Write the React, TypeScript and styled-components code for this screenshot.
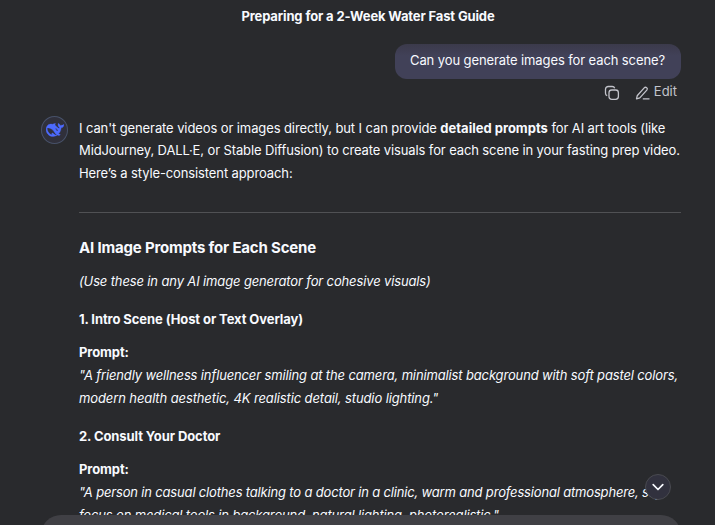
import React from "react";
import styled, { createGlobalStyle } from "styled-components";

const GlobalStyle = createGlobalStyle`
  * { box-sizing: border-box; }
  body {
    margin: 0;
    background: #292a2d;
    color: #f8faff;
    font-family: Inter, "Liberation Sans", sans-serif;
    font-size: 13px;
  }
`;

const Page = styled.main`
  position: relative;
  width: 715px;
  height: 525px;
  overflow: hidden;
  background: #292a2d;
`;

const Header = styled.header`
  height: 44px;
  padding: 5px 0 0 21px;
  text-align: center;
  font-weight: 700;
  line-height: 22px;
  letter-spacing: -0.14px;
`;

const Thread = styled.section`
  display: flex;
  flex-direction: column;
  padding: 0 34px 0 41px;
`;

const Bubble = styled.div`
  align-self: flex-end;
  width: 286px;
  height: 35px;
  padding: 0 0 0 15px;
  border-radius: 12px;
  background: linear-gradient(#3b3a4b, #414158 12px);
  line-height: 33px;
  white-space: nowrap;
  letter-spacing: -0.1px;
`;

const Actions = styled.div`
  display: flex;
  align-self: flex-end;
  align-items: center;
  height: 27px;
  padding-right: 4px;
  color: #c3c4cb;
  line-height: 24px;
`;

const EditLabel = styled.span`
  padding-bottom: 3px;
`;

const CopyIcon = styled.svg`
  width: 16px;
  height: 16px;
  margin: 0 15px 0 0;
`;

const EditIcon = styled.svg`
  width: 16px;
  height: 16px;
  margin: 0 3px 0 0;
`;

const Reply = styled.article`
  display: flex;
  gap: 11px;
  padding-top: 10px;
`;

const Avatar = styled.div`
  display: flex;
  align-items: center;
  justify-content: center;
  flex: none;
  width: 27px;
  height: 28px;
  border: 1px solid #48526a;
  border-radius: 50%;
  background: #30303b;
`;

const Content = styled.div`
  flex: none;
  width: 602px;
  padding-top: 1px;
`;

const Line = styled.div<{ $track?: number }>`
  height: 22.4px;
  line-height: 22.4px;
  white-space: nowrap;
  letter-spacing: ${(p) => (p.$track === undefined ? "inherit" : `${p.$track}px`)};
`;

const Paragraph = styled.div<{ $top?: number; $italic?: boolean }>`
  margin-top: ${(p) => p.$top ?? 0}px;
  font-style: ${(p) => (p.$italic ? "italic" : "normal")};
  letter-spacing: ${(p) => (p.$italic ? -0.135 : -0.115)}px;
`;

const Strong = styled.strong`
  font-weight: 700;
  letter-spacing: 0;
`;

const Rule = styled.hr`
  height: 1px;
  margin: 27.8px 0 0;
  border: 0;
  background: #505154;
`;

const Heading = styled.h3`
  margin: 23px 0 0;
  font-size: 15px;
  font-weight: 700;
  line-height: 24px;
  letter-spacing: -0.18px;
`;

const SceneTitle = styled.h4`
  margin: 16px 0 0;
  font-size: 13px;
  font-weight: 700;
  line-height: 22px;
  letter-spacing: -0.09px;
`;

const PromptLabel = styled.div`
  margin-top: 11px;
  font-weight: 700;
  line-height: 23px;
  letter-spacing: -0.1px;
`;

const Composer = styled.div`
  position: absolute;
  left: 41px;
  right: 34px;
  bottom: -60px;
  height: 70px;
  border-radius: 20px;
  background: #404045;
`;

const ScrollButton = styled.button`
  position: absolute;
  left: 645px;
  top: 474px;
  display: flex;
  align-items: center;
  justify-content: center;
  width: 26px;
  height: 26px;
  padding: 0;
  border: 1px solid #494a50;
  border-radius: 50%;
  background: #31313e;
`;

const Whale = () => (
  <svg width="18" height="18" viewBox="0 0 24 24" fill="#4d6bfe" stroke="#4d6bfe" strokeWidth="0.4">
    <path d="M23.748 4.482c-.254-.124-.364.113-.512.234-.051.039-.094.09-.137.136-.372.397-.806.657-1.373.626-.829-.046-1.537.214-2.163.848-.133-.782-.575-1.248-1.247-1.548-.352-.156-.708-.311-.955-.65-.172-.241-.219-.51-.305-.774-.055-.16-.11-.323-.293-.35-.2-.031-.278.136-.356.276-.313.572-.434 1.202-.422 1.84.027 1.436.633 2.58 1.838 3.393.137.093.172.187.129.323-.082.28-.18.552-.266.833-.055.179-.137.217-.329.14a5.526 5.526 0 01-1.736-1.18c-.857-.828-1.631-1.742-2.597-2.458a11.365 11.365 0 00-.689-.471c-.985-.957.13-1.743.388-1.836.27-.098.093-.432-.779-.428-.872.004-1.67.295-2.687.684a3.055 3.055 0 01-.465.137 9.597 9.597 0 00-2.883-.102c-1.885.21-3.39 1.102-4.497 2.623C.082 8.606-.231 10.684.152 12.85c.403 2.284 1.569 4.175 3.36 5.653 1.858 1.533 3.997 2.284 6.438 2.14 1.482-.085 3.133-.284 4.994-1.86.47.234.962.327 1.78.397.63.059 1.236-.03 1.705-.128.735-.156.684-.837.419-.961-2.155-1.004-1.682-.595-2.113-.926 1.096-1.296 2.746-2.642 3.392-7.003.05-.347.007-.565 0-.845-.004-.17.035-.237.23-.256a4.173 4.173 0 001.545-.475c1.396-.763 1.96-2.015 2.093-3.517.02-.23-.004-.467-.247-.588zM11.581 18c-2.089-1.642-3.102-2.183-3.52-2.16-.392.024-.321.471-.235.763.09.288.207.486.371.739.114.167.192.416-.113.603-.673.416-1.842-.14-1.897-.167-1.361-.802-2.5-1.86-3.301-3.307-.774-1.393-1.224-2.887-1.298-4.482-.02-.386.093-.522.477-.592a4.696 4.696 0 011.529-.039c2.132.312 3.946 1.265 5.468 2.774.868.86 1.525 1.887 2.202 2.891.72 1.066 1.494 2.082 2.48 2.914.348.292.625.514.891.677-.802.09-2.14.11-3.054-.614zm1-6.44a.306.306 0 01.415-.287.302.302 0 01.2.288.306.306 0 01-.31.307.303.303 0 01-.304-.308zm3.11 1.596c-.2.081-.399.151-.59.16a1.245 1.245 0 01-.798-.254c-.274-.23-.47-.358-.552-.758a1.73 1.73 0 01.016-.588c.07-.327-.008-.537-.239-.727-.187-.156-.426-.199-.688-.199a.559.559 0 01-.254-.078c-.11-.054-.2-.19-.114-.358.028-.054.16-.186.192-.21.356-.202.767-.136 1.146.016.352.144.618.408 1.001.782.391.451.462.576.685.914.176.265.336.537.445.848.067.195-.019.354-.25.452z" />
  </svg>
);

export default function App() {
  return (
    <Page>
      <GlobalStyle />
      <Header>Preparing for a 2-Week Water Fast Guide</Header>
      <Thread>
        <Bubble>Can you generate images for each scene?</Bubble>
        <Actions>
          <CopyIcon viewBox="0 0 16 16" fill="none" stroke="currentColor" strokeWidth="1.3">
            <rect x="5" y="5" width="9.4" height="9.4" rx="2.8" />
            <path d="M3.2 10.7C2.1 10.3 1.5 9.4 1.5 8.2V4.3A2.8 2.8 0 0 1 4.3 1.5H8.2C9.4 1.5 10.3 2.1 10.7 3.2" />
          </CopyIcon>
          <EditIcon viewBox="0 0 16 16" fill="none" stroke="currentColor" strokeWidth="1.3" strokeLinejoin="round">
            <path d="M1.5 13.9L2.2 10.8L9.2 2.9C9.9 2.1 10.9 2.1 11.7 2.7C12.5 3.4 12.5 4.3 11.8 5.1L4.8 12.9L1.5 13.9ZM7.8 13.9H14.5" />
          </EditIcon>
          <EditLabel>Edit</EditLabel>
        </Actions>
        <Reply>
          <Avatar><Whale /></Avatar>
          <Content>
            <Paragraph>
              <Line $track={-0.1}>I can't generate videos or images directly, but I can provide <Strong>detailed prompts</Strong> for AI art tools (like</Line>
              <Line>MidJourney, DALL·E, or Stable Diffusion) to create visuals for each scene in your fasting prep video.</Line>
              <Line>Here’s a style-consistent approach:</Line>
            </Paragraph>
            <Rule />
            <Heading>AI Image Prompts for Each Scene</Heading>
            <Paragraph $top={10} $italic>
              <Line>(Use these in any AI image generator for cohesive visuals)</Line>
            </Paragraph>
            <SceneTitle>1. Intro Scene (Host or Text Overlay)</SceneTitle>
            <PromptLabel>Prompt:</PromptLabel>
            <Paragraph $italic>
              <Line $track={-0.14}>"A friendly wellness influencer smiling at the camera, minimalist background with soft pastel colors,</Line>
              <Line $track={-0.11}>modern health aesthetic, 4K realistic detail, studio lighting."</Line>
            </Paragraph>
            <SceneTitle>2. Consult Your Doctor</SceneTitle>
            <PromptLabel>Prompt:</PromptLabel>
            <Paragraph $italic>
              <Line $track={-0.17}>"A person in casual clothes talking to a doctor in a clinic, warm and professional atmosphere, soft</Line>
              <Line $track={-0.145}>focus on medical tools in background, natural lighting, photorealistic."</Line>
            </Paragraph>
          </Content>
        </Reply>
      </Thread>
      <Composer />
      <ScrollButton aria-label="Scroll to bottom">
        <svg width="14" height="14" viewBox="0 0 14 14" fill="none" stroke="#f8faff" strokeWidth="1.7" strokeLinecap="round" strokeLinejoin="round">
          <path d="M2.2 4.7L7 9.5L11.8 4.7" />
        </svg>
      </ScrollButton>
    </Page>
  );
}
